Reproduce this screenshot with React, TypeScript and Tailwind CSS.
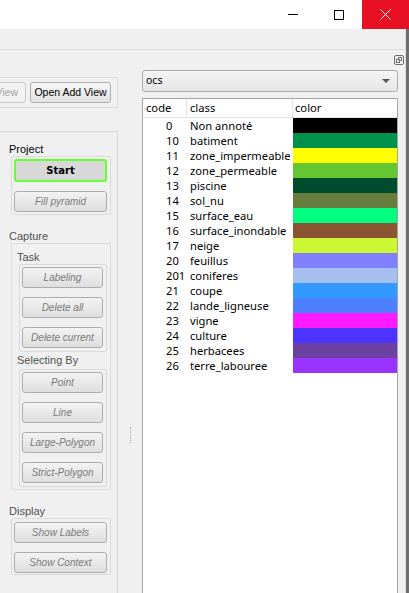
import type { ReactNode } from "react";

type Row = { code: string; label: string; color: string };

const rows: Row[] = [
  { code: "0", label: "Non annoté", color: "#000000" },
  { code: "10", label: "batiment", color: "#00914c" },
  { code: "11", label: "zone_impermeable", color: "#ffff00" },
  { code: "12", label: "zone_permeable", color: "#66c632" },
  { code: "13", label: "piscine", color: "#004c2d" },
  { code: "14", label: "sol_nu", color: "#667d3d" },
  { code: "15", label: "surface_eau", color: "#00ff80" },
  { code: "16", label: "surface_inondable", color: "#8b5534" },
  { code: "17", label: "neige", color: "#ccf833" },
  { code: "20", label: "feuillus", color: "#8080ff" },
  { code: "201", label: "coniferes", color: "#a5bff0" },
  { code: "21", label: "coupe", color: "#3399ff" },
  { code: "22", label: "lande_ligneuse", color: "#4d80ff" },
  { code: "23", label: "vigne", color: "#ff1aff" },
  { code: "24", label: "culture", color: "#4d33ff" },
  { code: "25", label: "herbacees", color: "#6c40a0" },
  { code: "26", label: "terre_labouree", color: "#9933ff" },
];

function Btn({ children, className = "" }: { children: ReactNode; className?: string }) {
  return (
    <div
      className={
        "flex h-[21px] shrink-0 items-center justify-center rounded-[3px] border border-[#adadad] bg-linear-to-b from-[#f3f3f3] to-[#dedede] text-[10px] italic leading-none text-[#7b7b7b] " +
        className
      }
    >
      {children}
    </div>
  );
}

function Label({ children, className = "" }: { children: ReactNode; className?: string }) {
  return <div className={"flex shrink-0 items-end text-[11px] leading-[13px] " + className}>{children}</div>;
}

function Box({ children, className = "" }: { children: ReactNode; className?: string }) {
  return <div className={"flex shrink-0 flex-col rounded-[2px] border border-[#dadada] " + className}>{children}</div>;
}

export default function App() {
  return (
    <div className="flex h-[593px] w-[409px] flex-col overflow-hidden bg-[#f0f0f0] font-['Liberation_Sans',Arial,sans-serif] text-black">
      {/* title bar */}
      <div className="flex h-[29px] shrink-0 justify-end bg-white">
        <div className="flex w-[46px] items-center justify-center">
          <div className="h-px w-[10px] bg-black" />
        </div>
        <div className="flex w-[46px] items-center justify-center">
          <div className="h-[10px] w-[10px] border border-black" />
        </div>
        <div className="flex w-[47px] items-center justify-center bg-[#e81123]">
          <svg width="11" height="11" viewBox="0 0 11 11">
            <path d="M0.5 0.5 L10.5 10.5 M10.5 0.5 L0.5 10.5" stroke="#fff" strokeWidth="1" />
          </svg>
        </div>
      </div>

      <div className="flex h-[564px] shrink-0">
        <div className="flex w-[405px] flex-col">
          <div className="h-[21px] shrink-0 border-b border-[#d9d9d9]" />

          <div className="flex h-[600px] shrink-0">
            {/* left dock */}
            <div className="flex w-[118px] shrink-0 flex-col pt-[27px]">
              <div className="flex h-[31px] shrink-0 justify-end gap-[4px] overflow-hidden border-y border-r border-[#dadada] pr-[6px] pt-[4px]">
                <div className="flex h-[21px] w-[90px] shrink-0 items-center justify-end rounded-[3px] border border-[#c9c9c9] bg-[#f2f2f2] pr-[7px] text-[10.5px] text-[#a3a3a3]">
                  Close View
                </div>
                <div className="flex h-[21px] w-[81px] shrink-0 items-center justify-center rounded-[3px] border border-[#adadad] bg-linear-to-b from-[#f6f6f6] to-[#e2e2e2] text-[10.5px]">
                  Open Add View
                </div>
              </div>

              <div className="mt-[23px] flex h-[600px] shrink-0 flex-col border-t border-r border-[#d6d6d6] pl-[11px]">
                <Label className="h-[24px] -ml-[2px] text-black">Project</Label>
                <Box className="h-[59px] w-[100px] pl-[2px] pt-[2px]">
                  <div className="flex h-[23px] w-[93px] items-center justify-center rounded-[3px] border-2 border-[#66ff33] bg-[#d8d8d8] font-['DejaVu_Sans',sans-serif] text-[10px] font-bold">
                    Start
                  </div>
                  <Btn className="mt-[9px] w-[93px]">Fill pyramid</Btn>
                </Box>

                <Label className="h-[28px] -ml-[2px] text-[#505050]">Capture</Label>
                <Box className="h-[247px] w-[100px]">
                  <Label className="h-[20px] pl-[5px] text-[#505050]">Task</Label>
                  <Box className="ml-[7px] h-[88px] w-[88px] pl-[2px] pt-[2px]">
                    <Btn className="w-[81px]">Labeling</Btn>
                    <Btn className="mt-[9px] w-[81px]">Delete all</Btn>
                    <Btn className="mt-[9px] w-[81px]">Delete current</Btn>
                  </Box>
                  <Label className="h-[17px] pb-[2px] pl-[5px] text-[#505050]">Selecting By</Label>
                  <Box className="ml-[7px] h-[118px] w-[88px] pl-[2px] pt-[2px]">
                    <Btn className="w-[81px]">Point</Btn>
                    <Btn className="mt-[9px] w-[81px]">Line</Btn>
                    <Btn className="mt-[9px] w-[81px]">Large-Polygon</Btn>
                    <Btn className="mt-[9px] w-[81px]">Strict-Polygon</Btn>
                  </Box>
                </Box>

                <Label className="h-[28px] -ml-[2px] text-[#505050]">Display</Label>
                <Box className="h-[57px] w-[100px] pl-[2px] pt-[3px]">
                  <Btn className="h-[20px] w-[93px]">Show Labels</Btn>
                  <Btn className="mt-[9px] w-[93px]">Show Context</Btn>
                </Box>
              </div>
            </div>

            {/* right dock */}
            <div className="flex w-[287px] shrink-0 flex-col">
              <div className="flex h-[20px] shrink-0 justify-end pr-px pt-[5px]">
                <svg width="10" height="10" viewBox="0 0 10 10">
                  <rect x="0.5" y="0.5" width="9" height="9" rx="1.5" fill="none" stroke="#6e6e6e" />
                  <rect x="4.5" y="2.5" width="3" height="3" fill="none" stroke="#6e6e6e" />
                  <rect x="2.5" y="4.5" width="3" height="3" fill="#f0f0f0" stroke="#6e6e6e" />
                </svg>
              </div>

              <div className="flex flex-1">
                <div className="flex w-[24px] shrink-0 justify-center pt-[357px]">
                  <div className="h-[16px] w-px border-l border-dotted border-[#a8a8a8]" />
                </div>

                <div className="flex w-[256px] shrink-0 flex-col font-['Noto_Sans',sans-serif] text-[11.2px]">
                  <div className="flex h-[22px] shrink-0 items-center justify-between rounded-[3px] border border-[#acacac] bg-linear-to-b from-[#f4f4f4] to-[#e6e6e6] pl-[3px] pr-[7px]">
                    <span className="text-[10.5px]">ocs</span>
                    <svg width="8" height="4" viewBox="0 0 8 4">
                      <path d="M0 0 L8 0 L4 4 Z" fill="#555" />
                    </svg>
                  </div>

                  <div className="mt-[6px] flex h-[520px] shrink-0 flex-col border border-[#a5a5a5] bg-white">
                    <div className="flex h-[19px] shrink-0 border-b border-[#e3e3e3] leading-[18px]">
                      <div className="w-[44px] shrink-0 border-r border-[#e3e3e3] pl-[3px]">code</div>
                      <div className="w-[106px] shrink-0 border-r border-[#e3e3e3] pl-[3px]">class</div>
                      <div className="flex-1 pl-[2px]">color</div>
                    </div>
                    {rows.map((row) => (
                      <div className="flex h-[15px] shrink-0 leading-[15px]" key={row.code}>
                        <div className="w-[44px] shrink-0 pl-[23px]">{row.code}</div>
                        <div className="w-[106px] shrink-0 whitespace-nowrap pl-[3px]">{row.label}</div>
                        <div className="flex-1" style={{ backgroundColor: row.color }} />
                      </div>
                    ))}
                  </div>
                </div>
              </div>
            </div>
          </div>
        </div>

        <div className="w-px shrink-0 bg-[#dedede]" />
        <div className="w-[3px] shrink-0 bg-[#6e6e6e]" />
      </div>
    </div>
  );
}
